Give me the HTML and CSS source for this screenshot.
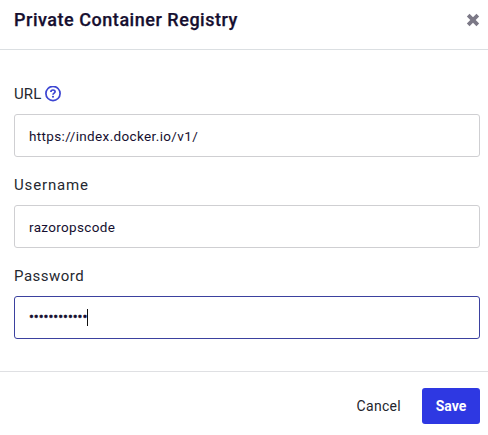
FILE: index.html
```html
<!DOCTYPE html>
<html lang="en">
<head>
<meta charset="utf-8">
<title>Private Container Registry</title>
<link rel="stylesheet" href="styles.css">
</head>
<body>
<section class="modal">
  <header class="modal-header">
    <h1 class="title">Private Container Registry</h1>
    <svg class="close" viewBox="0 0 14 14" width="14" height="14"><path d="M2.2 2.2L11.8 11.8M11.8 2.2L2.2 11.8"/></svg>
  </header>
  <div class="modal-body">
    <div class="label"><span class="label-url">URL</span>
      <svg class="help" viewBox="0 0 16 16" width="16" height="16"><circle cx="8" cy="7.5" r="7.1"/><path d="M5.9 6C5.9 4.7 6.8 4 8 4S10.1 4.7 10.1 5.8C10.1 7.1 8 7.1 8 8.7"/><circle class="dot" cx="8" cy="10.8" r="1.05"/></svg>
    </div>
    <div class="field"><span class="value-url">https://index.docker.io/v1/</span></div>
    <div class="label"><span class="label-user">Username</span></div>
    <div class="field"><span class="value-user">razoropscode</span></div>
    <div class="label"><span class="label-pass">Password</span></div>
    <div class="field focused"><span class="value-pass">••••••••••••</span><i class="caret"></i></div>
  </div>
  <footer class="modal-footer">
    <span class="cancel">Cancel</span>
    <span class="save"><span class="save-text">Save</span></span>
  </footer>
</section>
</body>
</html>
```
FILE: styles.css
```css
* { box-sizing: border-box; }
body { margin: 0; background: #fff; font-family: Roboto, "Liberation Sans", sans-serif; }
.modal { width: 488px; height: 435px; overflow: hidden; display: flex; flex-direction: column; }
.modal-header { height: 50px; flex: none; border-bottom: 1px solid #dbdfe2; display: flex; align-items: center; justify-content: space-between; padding: 0 8px 9px 14px; }
.title { margin: 0; font-size: 18px; line-height: 22px; font-weight: 500; letter-spacing: 0.53px; color: #160f30; -webkit-text-stroke: 0.25px #160f30; white-space: nowrap; }
.close { fill: none; stroke: #7c7987; stroke-width: 3.8; }
.modal-body { height: 322px; flex: none; border-bottom: 1px solid #dfe0e3; padding: 30px 8px 0 14px; }
.label { height: 28px; margin-bottom: 6px; display: flex; align-items: center; color: #252830; font-size: 15px; line-height: 20px; gap: 4px; }
.label-url { letter-spacing: 0.1px; }
.label-user { letter-spacing: 0.85px; }
.label-pass { letter-spacing: 0.5px; }
.help { fill: none; stroke: #3c45d2; stroke-width: 1.7; }
.help .dot { fill: #3c45d2; stroke: none; }
.field { height: 43px; border: 1px solid #cfcfd2; border-radius: 3px; padding: 0 14px; display: flex; align-items: center; color: #160f30; font-size: 13.5px; margin-bottom: 14px; }
.focused { border-color: #3b419f; }
.value-url { letter-spacing: 0.36px; }
.value-user { letter-spacing: 0.33px; }
.value-pass { width: 58px; font-size: 14.5px; letter-spacing: -0.03px; white-space: nowrap; -webkit-text-stroke: 0.4px #160f30; }
.caret { width: 1px; height: 17px; background: #111; }
.modal-footer { flex: 1; display: flex; align-items: flex-start; justify-content: flex-end; padding: 16px 8px 0; gap: 21px; font-size: 14px; line-height: 36px; }
.cancel { color: #24252c; letter-spacing: 0.3px; }
.save { width: 58px; height: 36px; border-radius: 3px; background: #2e38e2; color: #fff; font-weight: 700; text-align: center; }
```
